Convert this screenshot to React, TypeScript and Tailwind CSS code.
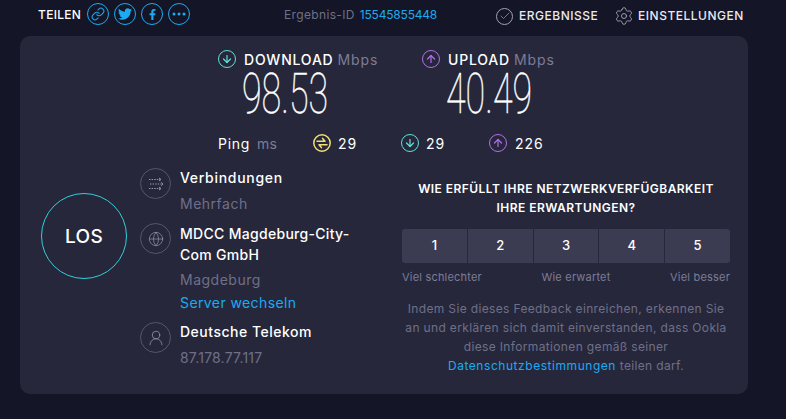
import React from 'react';
import { Link, Check, Settings, Globe, UserRound, ArrowDown, ArrowUp } from 'lucide-react';
import { FaTwitter, FaFacebookF } from 'react-icons/fa';

const ShareButton: React.FC<{ children: React.ReactNode }> = ({ children }) => (
  <div className="flex h-[22px] w-[22px] items-center justify-center rounded-full border-[1.5px] border-[#1cabf2] text-[#1cabf2]">
    {children}
  </div>
);

const SpeedIcon: React.FC<{ up?: boolean }> = ({ up }) => (
  <div
    className={`flex h-[18px] w-[18px] items-center justify-center rounded-full border-[1.5px] ${
      up ? 'border-[#b26fe8] text-[#b26fe8]' : 'border-[#5ee2d8] text-[#5ee2d8]'
    }`}
  >
    {up ? <ArrowUp size={12} strokeWidth={2.4} /> : <ArrowDown size={12} strokeWidth={2.4} />}
  </div>
);

const JitterIcon = () => (
  <svg width="18" height="18" viewBox="0 0 18 18" fill="none" stroke="#f2df76" strokeWidth="1.5">
    <circle cx="9" cy="9" r="8.2" />
    <path d="M4 7.2h8L9.6 4.4M14 10.8H6l2.4 2.8" strokeLinecap="round" strokeLinejoin="round" />
  </svg>
);

const RoundIcon: React.FC<{ children: React.ReactNode }> = ({ children }) => (
  <div className="flex h-[31px] w-[31px] shrink-0 items-center justify-center rounded-full border border-[#55566c] text-[#9a9bad]">
    {children}
  </div>
);

const Speed: React.FC<{ label: string; value: string; up?: boolean; width: string }> = ({ label, value, up, width }) => (
  <div className={width}>
    <div className="flex h-[18px] items-center">
      <SpeedIcon up={up} />
      <span className="ml-2 text-[14px] font-medium tracking-[0.8px] text-white">{label}</span>
      <span className="ml-[4px] text-[14px] tracking-[0.9px] text-[#7c7d95]">Mbps</span>
    </div>
    <div className="ml-[24px] mt-[1px] h-[50px] w-[86px] origin-left scale-x-[0.64] whitespace-nowrap font-['Roboto'] text-[56px] font-thin leading-[50px] text-white [-webkit-text-stroke:0.5px_white]">
      {value}
    </div>
  </div>
);

const App: React.FC = () => {
  return (
    <div className="h-[419px] w-[786px] overflow-hidden bg-[#141526] font-['Inter','Liberation_Sans',sans-serif]">
      {/* top bar */}
      <div className="flex h-[36px] items-start pl-[38px] pt-[3px]">
        <div className="flex h-[22px] items-center">
          <span className="mt-[2px] w-[49px] text-[12px] font-medium tracking-[0.3px] text-white">TEILEN</span>
          <div className="flex gap-[5px]">
            <ShareButton><Link size={14} strokeWidth={1.8} /></ShareButton>
            <ShareButton><FaTwitter size={14} /></ShareButton>
            <ShareButton><FaFacebookF size={11} /></ShareButton>
            <ShareButton>
              <svg width="14" height="4" viewBox="0 0 14 4" fill="currentColor">
                <circle cx="2" cy="2" r="1.5" />
                <circle cx="7" cy="2" r="1.5" />
                <circle cx="12" cy="2" r="1.5" />
              </svg>
            </ShareButton>
          </div>
        </div>
        <div className="ml-[94px] flex h-[24px] items-center text-[12px]">
          <span className="tracking-[0.35px] text-[#6f7088]">Ergebnis-ID</span>
          <span className="ml-[5px] tracking-[-0.2px] text-[#1cabf2]">15545855448</span>
        </div>
        <div className="ml-[59px] mt-[1px] flex h-[24px] items-center text-[12px] font-medium tracking-[0.5px] text-[#e9e9ee]">
          <div className="flex h-[17px] w-[17px] items-center justify-center rounded-full border border-[#a2a3b2] text-[#a2a3b2]">
            <Check size={12} strokeWidth={1.4} />
          </div>
          <span className="ml-[6px] w-[79px] whitespace-nowrap">ERGEBNISSE</span>
          <Settings size={20} strokeWidth={1.1} className="ml-[16px] text-[#a2a3b2]" />
          <span className="ml-[4px] whitespace-nowrap">EINSTELLUNGEN</span>
        </div>
      </div>

      {/* card */}
      <div className="ml-5 h-[358px] w-[728px] rounded-[10px] bg-[#26273b]">
        <div className="flex pl-[198px] pt-[14px]">
          <Speed label="DOWNLOAD" value="98.53" width="w-[204px]" />
          <Speed label="UPLOAD" value="40.49" up width="w-[204px]" />
        </div>

        {/* ping */}
        <div className="mt-[15px] flex h-[18px] items-center pl-[198px] text-[14px]">
          <span className="w-[39px] tracking-[0.7px] text-white">Ping</span>
          <span className="w-[56px] tracking-[0.3px] text-[#7c7d95]">ms</span>
          <JitterIcon />
          <span className="ml-[7px] w-[63px] tracking-[0.9px] text-white">29</span>
          <SpeedIcon />
          <span className="ml-[7px] w-[63px] tracking-[0.9px] text-white">29</span>
          <SpeedIcon up />
          <span className="ml-[8px] tracking-[0.9px] text-white">226</span>
        </div>

        <div className="mt-[16px] flex">
          {/* go button */}
          <div className="ml-[21px] mt-[25px] flex h-[86px] w-[86px] shrink-0 items-center justify-center rounded-full border border-[#2fd0d8] pt-[3px] text-[19px] font-medium tracking-[0.4px] text-white">
            LOS
          </div>

          {/* server info */}
          <div className="ml-[13px] w-[220px]">
            <div className="flex gap-[9px]">
              <RoundIcon>
                <svg width="16" height="14" viewBox="0 0 16 14" fill="none" stroke="currentColor" strokeWidth="1">
                  <path d="M1 2.5h11M2 7h11M1 11.5h11" strokeDasharray="1.4 1.2" />
                  <path d="M11 1l2 1.5L11 4M13 5.5L15 7l-2 1.5M11 10l2 1.5L11 13" />
                </svg>
              </RoundIcon>
              <div className="flex-1">
                <div className="text-[14px] font-medium leading-[20px] tracking-[0.7px] text-white">Verbindungen</div>
                <div className="mt-[6px] text-[14px] leading-[20px] tracking-[0.5px] text-[#6f7088]">Mehrfach</div>
              </div>
            </div>
            <div className="mt-[9px] flex gap-[9px]">
              <RoundIcon><Globe size={16} strokeWidth={1} /></RoundIcon>
              <div className="flex-1">
                <div className="text-[14px] font-medium leading-[21px] tracking-[0.3px] text-white">MDCC Magdeburg-City-Com GmbH</div>
                <div className="mt-[5px] text-[14px] leading-[20px] tracking-[0.5px] text-[#6f7088]">Magdeburg</div>
                <div className="mt-[3px] text-[14px] leading-[20px] tracking-[0.4px] text-[#1cabf2]">Server wechseln</div>
              </div>
            </div>
            <div className="mt-[9px] flex gap-[9px]">
              <RoundIcon><UserRound size={18} strokeWidth={1} /></RoundIcon>
              <div className="flex-1">
                <div className="text-[14px] font-medium leading-[20px] tracking-[0.5px] text-white">Deutsche Telekom</div>
                <div className="mt-[6px] text-[14px] leading-[20px] tracking-[0.2px] text-[#6f7088]">87.178.77.117</div>
              </div>
            </div>
          </div>

          {/* survey */}
          <div className="ml-[42px] w-[328px] pt-[11px]">
            <div className="whitespace-nowrap text-center text-[12px] font-semibold leading-[19px] tracking-[0.45px] text-white">
              WIE ERFÜLLT IHRE NETZWERKVERFÜGBARKEIT
              <br />
              IHRE ERWARTUNGEN?
            </div>
            <div className="mt-[12px] grid h-[34px] grid-cols-5 gap-px overflow-hidden rounded-[3px]">
              {[1, 2, 3, 4, 5].map(n => (
                <div key={n} className="flex items-center justify-center bg-[#3b3c52] text-[13px] font-medium text-white">
                  {n}
                </div>
              ))}
            </div>
            <div className="mt-[7px] flex justify-between text-[11px] leading-[14px] tracking-[0.2px] text-[#7c7d95]">
              <span>Viel schlechter</span>
              <span>Wie erwartet</span>
              <span>Viel besser</span>
            </div>
            <div className="mt-[15px] whitespace-nowrap text-center text-[12px] leading-[19px] tracking-[0.35px] text-[#6f7088]">
              Indem Sie dieses Feedback einreichen, erkennen Sie
              <br />
              an und erklären sich damit einverstanden, dass Ookla
              <br />
              diese Informationen gemäß seiner
              <br />
              <span className="tracking-[0.55px] text-[#1cabf2]">Datenschutzbestimmungen</span> teilen darf.
            </div>
          </div>
        </div>
      </div>
    </div>
  );
};

export default App;
